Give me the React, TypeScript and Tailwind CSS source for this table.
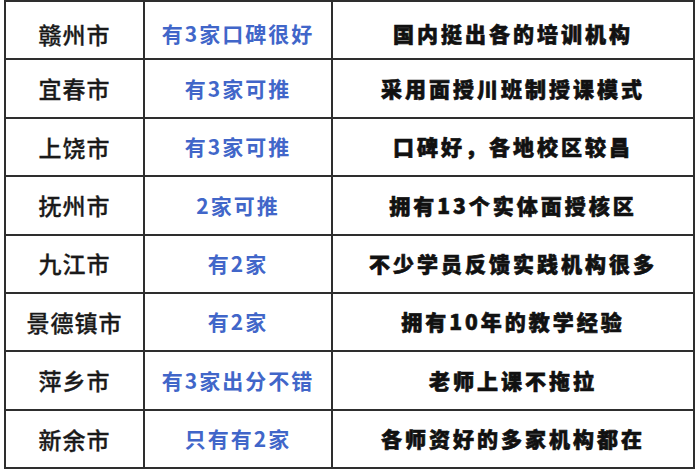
import React from "react";

const rows: [string, string, string][] = [
  ["赣州市", "有3家口碑很好", "国内挺出各的培训机构"],
  ["宜春市", "有3家可推", "采用面授川班制授课模式"],
  ["上饶市", "有3家可推", "口碑好，各地校区较昌"],
  ["抚州市", "2家可推", "拥有13个实体面授核区"],
  ["九江市", "有2家", "不少学员反馈实践机构很多"],
  ["景德镇市", "有2家", "拥有10年的教学经验"],
  ["萍乡市", "有3家出分不错", "老师上课不拖拉"],
  ["新余市", "只有有2家", "各师资好的多家机构都在"],
];

export default function App() {
  return (
    <div className="w-[700px] h-[470px] bg-white overflow-hidden">
      <div
        className="ml-[4px] w-[691px] h-[469px] bg-[#2e2e2e] p-[2px] grid grid-cols-[137px_186px_360px] grid-rows-[repeat(8,1fr)] gap-[2px]"
        style={{ fontFamily: '"Noto Sans CJK SC", "Noto Sans", sans-serif' }}
      >
        {rows.map((r, i) => (
          <React.Fragment key={i}>
            <div className={`bg-white flex items-center justify-center text-[23px] font-medium text-[#1a1a1a] tracking-[1px] [-webkit-text-stroke:0.3px_#1a1a1a] ${i === 0 ? "pt-[8px]" : ""}`}>
              {r[0]}
            </div>
            <div className={`bg-white flex items-center justify-center text-[21px] font-bold text-[#4166c9] tracking-[2px] ${i === 0 ? "pt-[8px]" : ""}`}>
              {r[1]}
            </div>
            <div className={`bg-white flex items-center justify-center text-[21px] font-black text-[#111] tracking-[3px] [-webkit-text-stroke:0.6px_#111] ${i === 0 ? "pt-[8px]" : ""}`}>
              {r[2]}
            </div>
          </React.Fragment>
        ))}
      </div>
    </div>
  );
}
